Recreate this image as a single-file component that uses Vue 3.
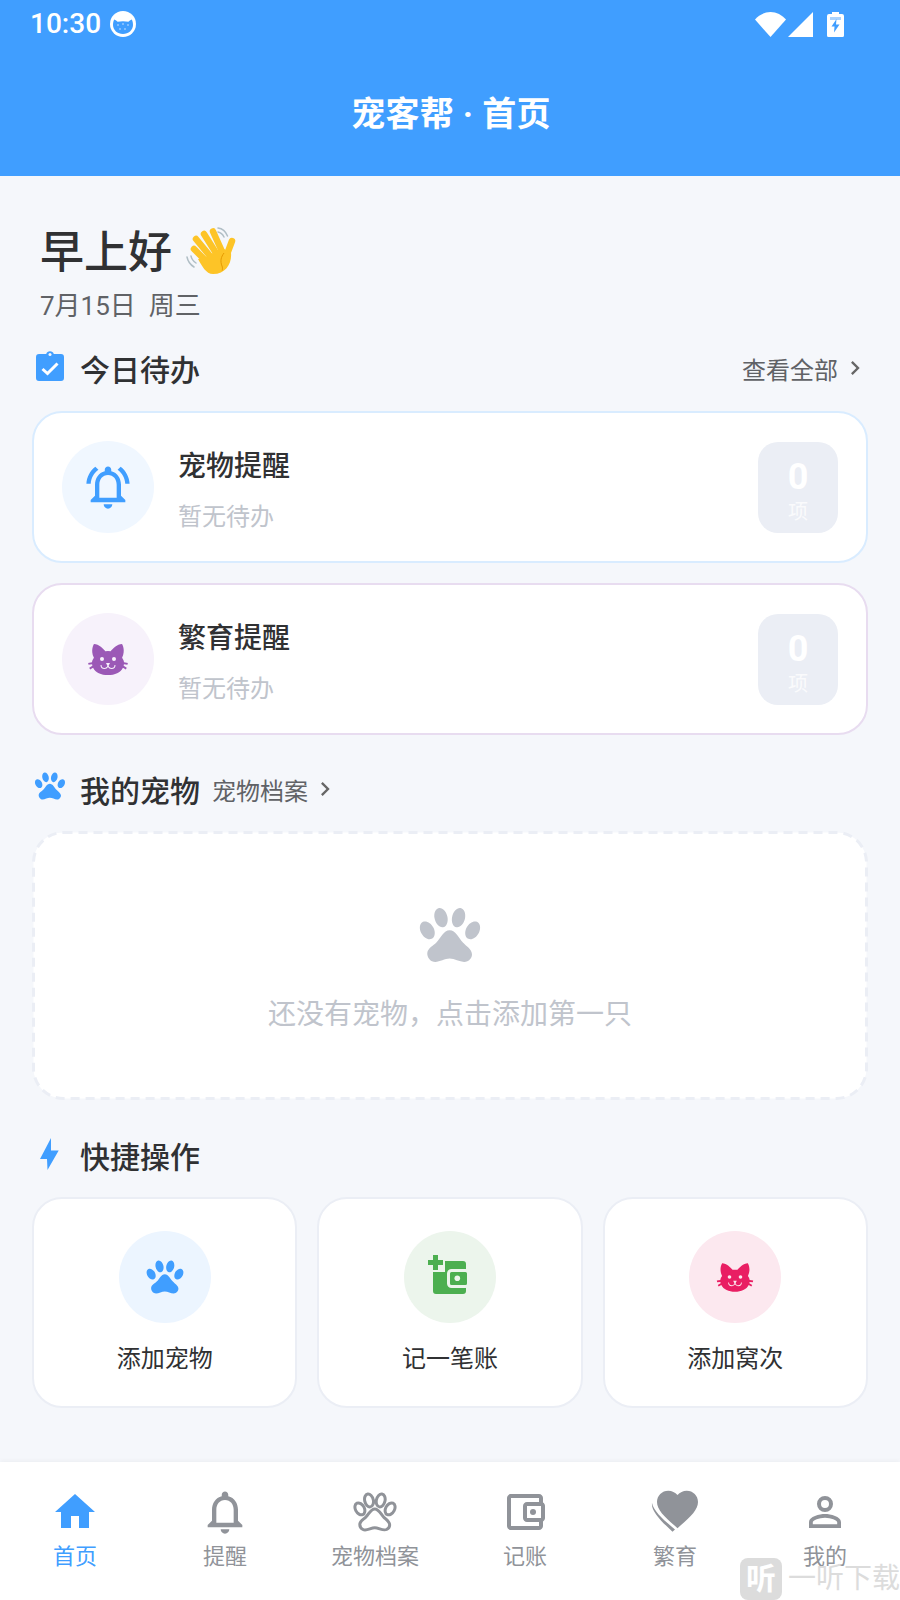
<script setup>
const pawPath = 'M8.35,3C9.53,2.83 10.78,4.12 11.14,5.9C11.5,7.67 10.85,9.25 9.67,9.43C8.5,9.61 7.24,8.32 6.87,6.54C6.5,4.77 7.17,3.19 8.35,3M15.5,3C16.69,3.19 17.35,4.77 17,6.54C16.62,8.32 15.37,9.61 14.19,9.43C13,9.25 12.35,7.67 12.72,5.9C13.08,4.12 14.33,2.83 15.5,3M3,7.6C4.14,7.11 5.69,8 6.5,9.55C7.26,11.13 7,12.79 5.87,13.28C4.74,13.77 3.2,12.89 2.41,11.32C1.62,9.75 1.9,8.08 3,7.6M21,7.6C22.1,8.08 22.38,9.75 21.59,11.32C20.8,12.89 19.26,13.77 18.13,13.28C17,12.79 16.74,11.13 17.5,9.55C18.31,8 19.86,7.11 21,7.6M19.33,18.38C19.37,19.32 18.65,20.36 17.79,20.75C16,21.57 13.88,19.87 11.89,19.87C9.9,19.87 7.76,21.64 6,20.75C5,20.26 4.31,18.96 4.44,17.88C4.62,16.39 6.41,15.59 7.47,14.5C8.88,13.09 9.88,10.44 11.89,10.44C13.89,10.44 14.95,13.05 16.3,14.5C17.41,15.72 19.26,16.75 19.33,18.38Z'
const catPath = 'M12,8L10.67,8.09C9.81,7.07 7.4,4.5 5,4.5C5,4.5 3.03,7.46 4.96,11.41C4.41,12.24 4.07,12.67 4,13.66L2.07,13.95L2.28,14.93L4.04,14.67L4.18,15.38L2.61,16.32L3.08,17.21L4.53,16.32C5.68,18.76 8.59,20 12,20C15.41,20 18.32,18.76 19.47,16.32L20.92,17.21L21.39,16.32L19.82,15.38L19.96,14.67L21.72,14.93L21.93,13.95L20,13.66C19.93,12.67 19.59,12.24 19.04,11.41C20.97,7.46 19,4.5 19,4.5C16.6,4.5 14.19,7.07 13.33,8.09L12,8M9,11A1,1 0 0,1 10,12A1,1 0 0,1 9,13A1,1 0 0,1 8,12A1,1 0 0,1 9,11M15,11A1,1 0 0,1 16,12A1,1 0 0,1 15,13A1,1 0 0,1 14,12A1,1 0 0,1 15,11M11,14H13L12.3,15.39C12.5,16.03 13.06,16.5 13.75,16.5A1.5,1.5 0 0,0 15.25,15H15.75A2,2 0 0,1 13.75,17C13,17 12.35,16.59 12,16V16H12C11.65,16.59 11,17 10.25,17A2,2 0 0,1 8.25,15H8.75A1.5,1.5 0 0,0 10.25,16.5C10.94,16.5 11.5,16.03 11.7,15.39L11,14Z'
const bellOutline = 'M18 16v-5c0-3.07-1.63-5.64-4.5-6.32V4c0-.83-.67-1.5-1.5-1.5s-1.5.67-1.5 1.5v.68C7.64 5.36 6 7.92 6 11v5l-2 2v1h16v-1l-2-2zm-2 1H8v-6c0-2.48 1.51-4.5 4-4.5s4 2.02 4 4.5v6zm-4 5c1.1 0 2-.9 2-2h-4c0 1.1.9 2 2 2z'
const bellWaves = 'M7.58 4.08L6.15 2.65C3.75 4.48 2.17 7.3 2.03 10.5h2c.15-2.65 1.51-4.97 3.55-6.42zM19.97 10.5h2c-.15-3.2-1.73-6.02-4.12-7.85l-1.42 1.43c2.02 1.45 3.39 3.77 3.54 6.42z'

const tasks = [
  { name: '宠物提醒', kind: 'pet' },
  { name: '繁育提醒', kind: 'breed' },
]
</script>

<template>
  <div class="page">
    <header class="top">
      <div class="status">
        <span class="time">10:30</span>
        <svg class="status-face" viewBox="0 0 26 26">
          <circle cx="13" cy="13" r="13" fill="#fff" />
          <path d="M3 14c0-2 .4-4 1.200-5.500 1.500.5 2.600 1.300 3.400 2.300 3.500-.8 7.300-.8 10.800 0 .8-1 1.900-1.800 3.400-2.300.8 1.500 1.200 3.500 1.200 5.500 0 5-4.500 9-10 9S3 19 3 14z" fill="#409eff" />
          <g fill="#cfe6ff">
            <circle cx="8" cy="14" r=".8" />
            <circle cx="13" cy="13" r=".8" />
            <circle cx="18" cy="14" r=".8" />
            <circle cx="10" cy="18" r=".8" />
            <circle cx="15" cy="18" r=".8" />
          </g>
        </svg>
        <span class="status-gap"></span>
        <svg class="wifi" viewBox="0 0 31 25"><path d="M0 7.500C4 3 9.500 0 15.500 0S27 3 31 7.500L15.500 25z" fill="#fff" /></svg>
        <svg class="signal" viewBox="0 0 25 25"><path d="M25 0v25H0z" fill="#fff" /></svg>
        <svg class="battery" viewBox="0 0 17 25">
          <path d="M5 0h7v2h3a2 2 0 0 1 2 2v19.500a1.500 1.500 0 0 1-1.500 1.500h-14A1.500 1.500 0 0 1 0 23.500V4a2 2 0 0 1 2-2h3z" fill="#fff" />
          <path d="M3 5h11v3H3z" fill="#a9d3ff" />
          <path d="M9.500 7L4.500 14.500h3L7 20.500 12.500 12.500H9z" fill="#409eff" />
        </svg>
      </div>
      <h1 class="title">宠客帮 · 首页</h1>
    </header>

    <main class="content">
      <div class="greeting">
        <span>早上好</span>
        <svg class="wave" viewBox="0 0 64 64">
          <g fill="none" stroke="#b0bec5" stroke-width="1.500" stroke-linecap="round">
            <path d="M38 12c2.500.5 4.500 2 6 5" />
            <path d="M38 8c4 .5 7.500 3 9.500 8" />
            <path d="M11 36c.5 3 2 5 5 7" />
            <path d="M7 37c.8 4 3 7.500 7 10" />
          </g>
          <g stroke="#fdc427" stroke-width="6.500" stroke-linecap="round">
            <path d="M14 29l13 13" />
            <path d="M16 19l14 17" />
            <path d="M24 14l12 19" />
            <path d="M33 11.500l9 20" />
            <path d="M52 21l-6 16" />
          </g>
          <path d="M24 38l18-10 9 5c1 10-5 21-18 21-7 0-11-8-15-15z" fill="#fdc427" />
          <path d="M44 33c-3 4-4 8-2 13 .6 1.500.6 3 .2 4.500" fill="none" stroke="#e59a00" stroke-width="1" />
        </svg>
      </div>
      <div class="date">7月15日&nbsp;&nbsp;周三</div>

      <div class="section-head todo-head">
        <div class="section-left">
          <span class="section-icon">
            <svg class="clip" viewBox="0 0 28 30">
              <path d="M3 3h7.200a4 4 0 0 1 7.600 0H25a3 3 0 0 1 3 3v21a3 3 0 0 1-3 3H3a3 3 0 0 1-3-3V6a3 3 0 0 1 3-3z" fill="#409eff" />
              <circle cx="14" cy="3.500" r="1.500" fill="#f5f7fb" />
              <path d="M6.500 18l5 4.500 10-10" fill="none" stroke="#fff" stroke-width="3" />
            </svg>
          </span>
          <h2>今日待办</h2>
        </div>
        <div class="link link-all">查看全部<svg class="chev" viewBox="0 0 24 24"><path d="M8.600 16.600L13.200 12 8.600 7.400 10 6l6 6-6 6z" fill="#666" /></svg></div>
      </div>

      <div class="task-list">
        <div v-for="t in tasks" :key="t.kind" class="task" :class="t.kind">
          <div class="task-icon">
            <svg v-if="t.kind === 'pet'" class="i-bell" viewBox="0 0 24 24">
              <path :d="bellOutline" fill="#409eff" />
              <path :d="bellWaves" fill="#409eff" />
            </svg>
            <svg v-else class="i-cat-lg" viewBox="0 0 24 24"><path :d="catPath" fill="#9b59b6" fill-rule="evenodd" /></svg>
          </div>
          <div class="task-text">
            <div class="task-name">{{ t.name }}</div>
            <div class="task-sub">暂无待办</div>
          </div>
          <div class="count">
            <span class="num">0</span>
            <span class="unit">项</span>
          </div>
        </div>
      </div>

      <div class="section-head pet-head">
        <div class="section-left">
          <span class="section-icon">
            <svg class="i-paw-sm" viewBox="0 0 24 24"><path :d="pawPath" fill="#409eff" /></svg>
          </span>
          <h2>我的宠物</h2>
          <div class="link link-pet">宠物档案<svg class="chev" viewBox="0 0 24 24"><path d="M8.600 16.600L13.200 12 8.600 7.400 10 6l6 6-6 6z" fill="#666" /></svg></div>
        </div>
      </div>

      <div class="empty">
        <!-- svg border because a css dashed border has shorter dashes -->
        <svg class="empty-border" viewBox="0 0 836 269">
          <rect x="1.500" y="1.500" width="833" height="266" rx="30" fill="#fff" stroke="#ebeef5" stroke-width="3" stroke-dasharray="9 6" />
        </svg>
        <svg class="i-paw-lg" viewBox="0 0 24 24"><path :d="pawPath" fill="#c0c4cc" /></svg>
        <p>还没有宠物&#xFF0C;点击添加第一只</p>
      </div>

      <div class="section-head quick-head">
        <div class="section-left">
          <span class="section-icon">
            <svg class="bolt" viewBox="0 0 19 32"><path d="M11 0L0 21h7l.5 11L18.700 12.500H11z" fill="#409eff" /></svg>
          </span>
          <h2>快捷操作</h2>
        </div>
      </div>

      <div class="quick">
        <div class="quick-card">
          <div class="quick-icon q-blue">
            <svg class="i-paw" viewBox="0 0 24 24"><path :d="pawPath" fill="#409eff" /></svg>
          </div>
          <span>添加宠物</span>
        </div>
        <div class="quick-card">
          <div class="quick-icon q-green">
            <svg class="i-wallet" viewBox="0 0 40 39">
              <path d="M17 6h18a3 3 0 0 1 3 3v27a3 3 0 0 1-3 3H8a3 3 0 0 1-3-3V17h12z" fill="#4caf50" />
              <rect x="20.500" y="15.500" width="20" height="16" rx="3" fill="#4caf50" stroke="#ecf5ec" stroke-width="3" />
              <circle cx="29.300" cy="23.200" r="2.800" fill="#ecf5ec" />
              <path d="M5 0h5v5h5v5h-5v5H5v-5H0V5h5z" fill="#4caf50" />
            </svg>
          </div>
          <span>记一笔账</span>
        </div>
        <div class="quick-card">
          <div class="quick-icon q-pink">
            <svg class="i-cat" viewBox="0 0 24 24"><path :d="catPath" fill="#e91e63" fill-rule="evenodd" /></svg>
          </div>
          <span>添加窝次</span>
        </div>
      </div>
    </main>

    <nav class="tabs">
      <div class="tab active">
        <svg class="tab-icon" viewBox="0 0 24 24"><path d="M10,20V14H14V20H19V12H22L12,3L2,12H5V20H10Z" fill="#409eff" /></svg>
        <span>首页</span>
      </div>
      <div class="tab">
        <svg class="tab-icon bell" viewBox="0 0 24 24"><path :d="bellOutline" fill="#909399" /></svg>
        <span>提醒</span>
      </div>
      <div class="tab">
        <svg class="tab-icon" viewBox="0 0 24 24"><path :d="pawPath" fill="none" stroke="#909399" stroke-width="1.500" /></svg>
        <span>宠物档案</span>
      </div>
      <div class="tab">
        <svg class="tab-icon" viewBox="0 0 24 24">
          <path d="M21 7.280V5c0-1.100-.9-2-2-2H5c-1.110 0-2 .9-2 2v14c0 1.100.89 2 2 2h14c1.100 0 2-.9 2-2v-2.280c.59-.35 1-.98 1-1.720V9c0-.74-.41-1.380-1-1.720zM20 9v6h-7V9h7zM5 19V5h14v2h-6c-1.100 0-2 .9-2 2v6c0 1.100.9 2 2 2h6v2H5z" fill="#909399" />
          <circle cx="16" cy="12" r="1.500" fill="#909399" />
        </svg>
        <span>记账</span>
      </div>
      <div class="tab">
        <svg class="tab-icon" viewBox="0 0 48 48">
          <g transform="translate(1.900 -3.450) scale(2.050)">
            <path d="M12,21.350L10.550,20.030C5.400,15.360 2,12.270 2,8.500C2,5.410 4.420,3 7.500,3C9.240,3 10.910,3.810 12,5.080C13.090,3.810 14.760,3 16.500,3C19.580,3 22,5.410 22,8.500C22,12.270 18.600,15.360 13.450,20.030L12,21.350Z" fill="#909399" />
          </g>
          <path d="M1 15C0 23 10 33 21.500 43.700L24 41.500C13 32 3 24 1 15Z" fill="#909399" />
        </svg>
        <span>繁育</span>
      </div>
      <div class="tab">
        <svg class="tab-icon" viewBox="0 0 24 24"><path d="M12,4A4,4 0 0,1 16,8A4,4 0 0,1 12,12A4,4 0 0,1 8,8A4,4 0 0,1 12,4M12,6A2,2 0 0,0 10,8A2,2 0 0,0 12,10A2,2 0 0,0 14,8A2,2 0 0,0 12,6M12,13C14.670,13 20,14.330 20,17V20H4V17C4,14.330 9.330,13 12,13M12,14.900C9.030,14.900 5.900,16.360 5.900,17V18.100H18.100V17C18.100,16.360 14.970,14.900 12,14.900Z" fill="#909399" fill-rule="evenodd" /></svg>
        <span>我的</span>
      </div>
    </nav>

    <!-- watermark sits on top of the tab bar -->
    <div class="watermark">
      <span class="mark-box">听</span>
      <span class="mark-text">一听下载</span>
    </div>
  </div>
</template>

<style scoped>
.page {
  position: relative;
  width: 900px;
  height: 1600px;
  display: flex;
  flex-direction: column;
  overflow: hidden;
  background: #f5f7fb;
  font-family: Roboto, "Noto Sans CJK SC", sans-serif;
  color: #303133;
}

.top {
  height: 176px;
  background: #409eff;
  color: #fff;
  flex-shrink: 0;
}

.status {
  height: 48px;
  display: flex;
  align-items: center;
  padding: 0 56px 0 30px;
}

.time {
  font-size: 28px;
  font-weight: 500;
  line-height: 48px;
}

.status-face {
  width: 26px;
  height: 26px;
  margin-left: 9px;
}

.status-gap {
  flex: 1;
}

.wifi {
  width: 31px;
  height: 25px;
}

.signal {
  width: 25px;
  height: 25px;
  margin-left: 2px;
}

.battery {
  width: 17px;
  height: 25px;
  margin-left: 14px;
}

.title {
  margin: 0;
  font-size: 34px;
  font-weight: 700;
  line-height: 48px;
  letter-spacing: 0.3px;
  text-align: center;
  padding: 42px 0 0 2px;
}

.content {
  flex: 1;
  padding: 0 32px;
}

.greeting {
  display: flex;
  align-items: center;
  height: 64px;
  margin-top: 41px;
  padding-left: 8px;
  font-size: 44px;
  font-weight: 500;
  color: #303133;
}

.wave {
  width: 64px;
  height: 64px;
  margin: 6px 0 0 8px;
}

.date {
  padding-left: 8px;
  font-size: 26px;
  line-height: 36px;
  color: #606266;
  margin-top: 7px;
}

.section-head {
  display: flex;
  align-items: center;
  justify-content: space-between;
  height: 40px;
}

.todo-head {
  margin-top: 24px;
}

.pet-head {
  margin-top: 34px;
}

.quick-head {
  margin-top: 35px;
}

.section-left {
  display: flex;
  align-items: center;
}

.section-icon {
  width: 48px;
  display: flex;
  justify-content: center;
}

.section-head h2 {
  margin: 0;
  font-size: 30px;
  font-weight: 500;
  color: #303133;
}

.clip {
  width: 28px;
  height: 30px;
  margin-right: 12px;
  margin-top: -5px;
}

.i-paw-sm {
  width: 38px;
  height: 38px;
  margin-right: 12px;
  margin-top: -6px;
}

.bolt {
  width: 19px;
  height: 32px;
  margin-right: 14px;
  margin-top: -2px;
}

.link {
  display: flex;
  align-items: center;
  font-size: 24px;
  color: #606266;
}

.link-all {
  margin-right: -1px;
}

.link-pet {
  margin-left: 12px;
}

.chev {
  width: 28px;
  height: 28px;
  margin-left: 3px;
}

.task-list {
  display: flex;
  flex-direction: column;
  gap: 20px;
  margin-top: 23px;
}

.task {
  height: 152px;
  box-sizing: border-box;
  display: flex;
  align-items: center;
  padding: 0 28px;
  background: #fff;
  border: 2px solid #d9ecff;
  border-radius: 30px;
}

.task.breed {
  border-color: #e8dcf0;
}

.task-icon {
  width: 92px;
  height: 92px;
  border-radius: 50%;
  background: #f0f7ff;
  display: flex;
  align-items: center;
  justify-content: center;
  flex-shrink: 0;
}

.breed .task-icon {
  background: #f7f2fb;
}

.i-bell {
  width: 52px;
  height: 52px;
}

.i-cat-lg {
  width: 48px;
  height: 48px;
}

.i-cat {
  width: 44px;
  height: 44px;
}

.task-text {
  flex: 1;
  margin-left: 24px;
  padding-top: 6px;
}

.task-name {
  font-size: 28px;
  font-weight: 500;
  line-height: 40px;
  color: #303133;
}

.task-sub {
  font-size: 24px;
  line-height: 34px;
  margin-top: 13px;
  color: #c0c4cc;
}

.count {
  width: 80px;
  height: 91px;
  box-sizing: border-box;
  padding-top: 15px;
  border-radius: 20px;
  background: #ebeef5;
  display: flex;
  flex-direction: column;
  align-items: center;
  color: #fff;
}

.num {
  font-size: 36px;
  font-weight: 700;
  line-height: 40px;
}

.unit {
  font-size: 20px;
  line-height: 26px;
  margin-top: 2px;
  opacity: 0.75;
}

.empty {
  position: relative;
  margin-top: 22px;
  height: 269px;
  display: flex;
  flex-direction: column;
  align-items: center;
}

.empty-border {
  position: absolute;
  left: 0;
  top: 0;
  width: 836px;
  height: 269px;
}

.i-paw-lg {
  position: relative;
  width: 72px;
  height: 72px;
  margin-top: 68px;
}

.empty p {
  position: relative;
  margin: 24px 0 0;
  font-size: 28px;
  line-height: 40px;
  color: #c0c4cc;
}

.quick {
  display: grid;
  grid-template-columns: repeat(3, 1fr);
  gap: 20px;
  margin-top: 22px;
}

.quick-card {
  height: 211px;
  box-sizing: border-box;
  background: #fff;
  border: 2px solid #ebeef5;
  border-radius: 30px;
  display: flex;
  flex-direction: column;
  align-items: center;
  padding-top: 32px;
  font-size: 24px;
  color: #303133;
}

.quick-icon {
  width: 92px;
  height: 92px;
  border-radius: 50%;
  display: flex;
  align-items: center;
  justify-content: center;
  margin-bottom: 19px;
}

.q-blue {
  background: #ecf5ff;
}

.q-green {
  background: #ecf5ec;
}

.q-pink {
  background: #fce8ef;
}

.i-paw {
  width: 44px;
  height: 44px;
}

.i-wallet {
  width: 40px;
  height: 39px;
  margin: 0 4px 6px 0;
}

.quick-card span {
  line-height: 34px;
}

.tabs {
  height: 138px;
  flex-shrink: 0;
  box-sizing: border-box;
  display: grid;
  grid-template-columns: repeat(6, 1fr);
  background: #fff;
  box-shadow: 0 -2px 4px rgba(0, 0, 0, 0.03);
  padding-top: 26px;
}

.tab {
  display: flex;
  flex-direction: column;
  align-items: center;
  font-size: 22px;
  color: #909399;
}

.tab.active {
  color: #409eff;
}

.tab-icon {
  width: 48px;
  height: 48px;
}

.tab-icon.bell {
  width: 52px;
  height: 52px;
  margin: -2px 0;
}

.tab span {
  line-height: 30px;
  margin-top: 6px;
}

.watermark {
  position: absolute;
  left: 740px;
  top: 1558px;
  display: flex;
  align-items: center;
  pointer-events: none;
}

.mark-box {
  width: 42px;
  height: 42px;
  border-radius: 8px;
  background: #dcdcdc;
  color: #fff;
  font-size: 30px;
  font-weight: 700;
  line-height: 42px;
  text-align: center;
}

.mark-text {
  margin-left: 6px;
  font-size: 28px;
  line-height: 42px;
  color: #dcdcdc;
}
</style>
